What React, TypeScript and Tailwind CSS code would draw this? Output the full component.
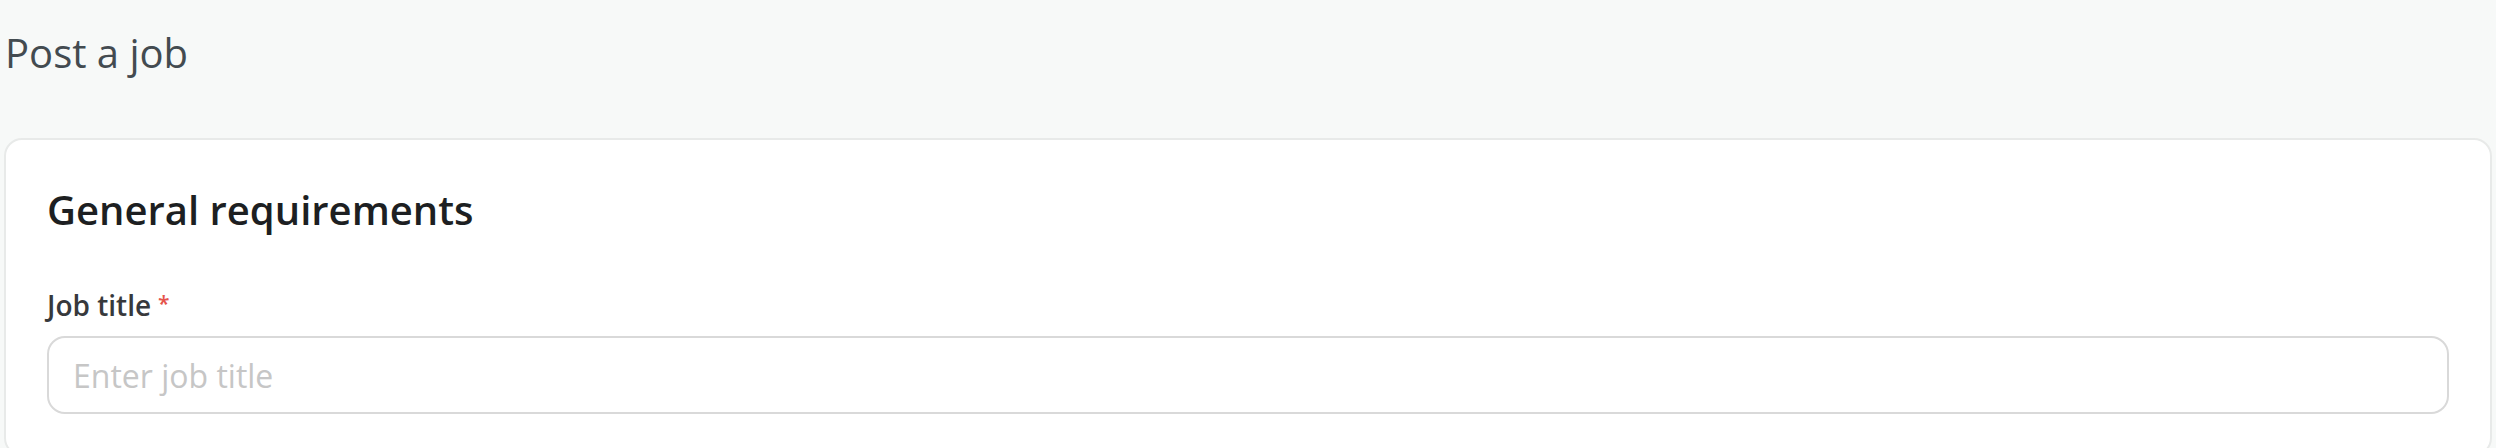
import React from 'react';

const PostJob: React.FC = () => {
    return (
        <div className="min-h-screen bg-[#f7f9f8] px-[4px] pt-[23px] font-['Open_Sans',sans-serif]">
            <h1 className="pl-[1px] text-[40px] font-medium leading-normal text-[#434b50]">Post a job</h1>

            <div className="mt-[55px] rounded-[18px] border-2 border-[#e8eae9] bg-white px-[41px] pt-[40px] pb-[40px]">
                <h2 className="text-[40px] font-semibold leading-normal text-[#1d1f22]">General requirements</h2>

                <label className="mt-[44px] block text-[28px] font-semibold leading-normal text-[#37393c]">
                    Job title
                    <span className="relative -top-[5px] ml-[7px] text-[21px] text-[#e5534b]">*</span>
                </label>
                <input
                    type="text"
                    placeholder="Enter job title"
                    className="mt-[10px] block h-[78px] w-full rounded-[18px] border-2 border-[#d9d9d9] bg-white px-[24px] text-[32px] text-[#1d1f22] outline-none placeholder:text-[#c6c6c6]"
                />
            </div>
        </div>
    );
};

export default function App() {
    return <PostJob />;
}
